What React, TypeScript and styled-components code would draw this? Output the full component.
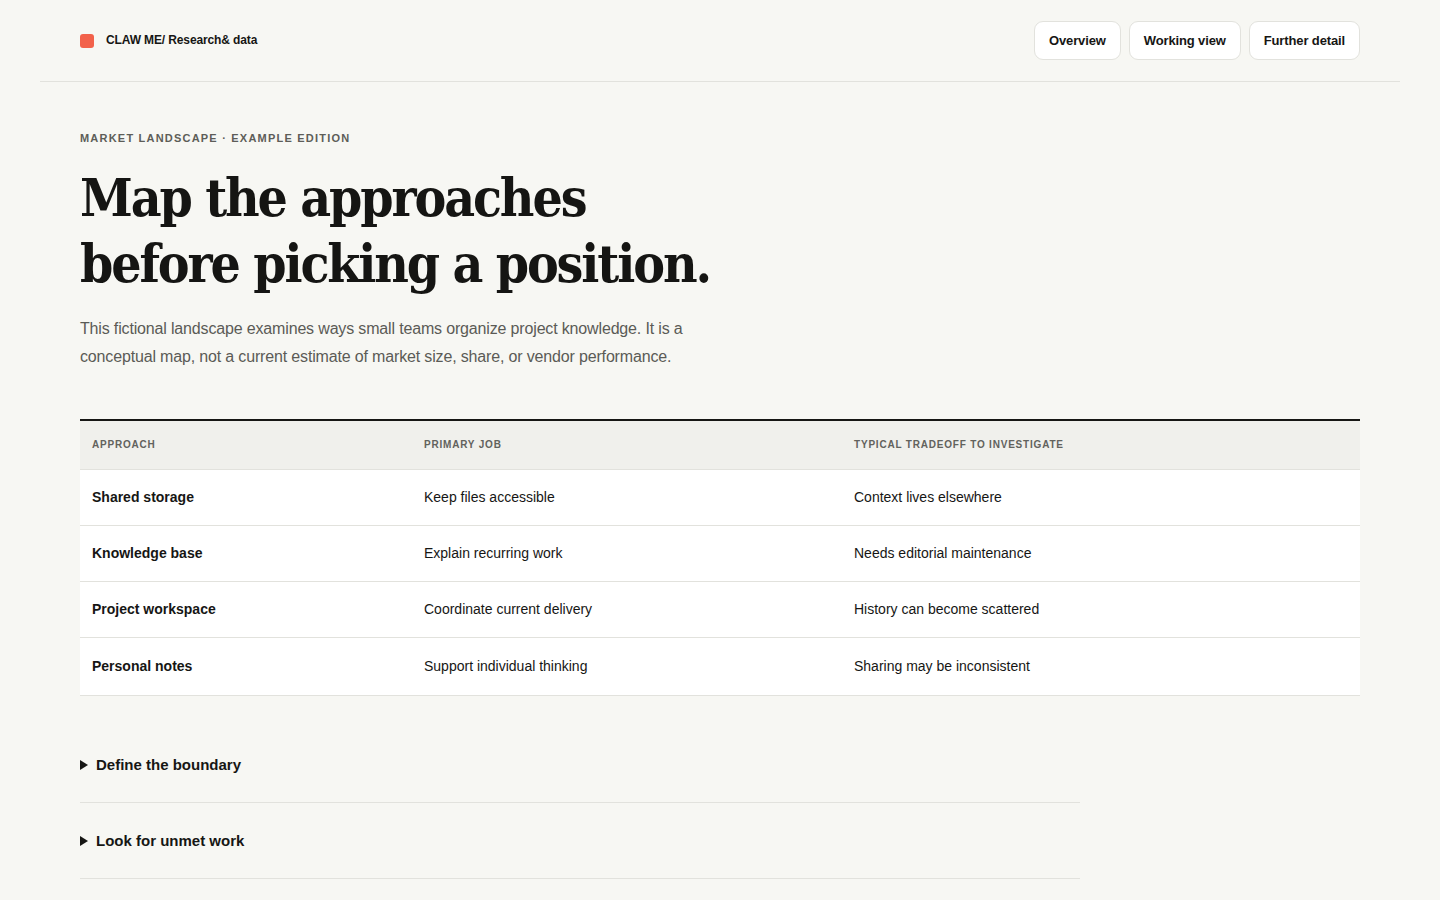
import React from 'react'
import styled, { createGlobalStyle } from 'styled-components'

const GlobalStyle = createGlobalStyle`
  * { box-sizing: border-box; }
  body {
    margin: 0;
    background: #f7f7f3;
    color: #161614;
    font-family: "Liberation Sans", Arial, sans-serif;
  }
`

type Row = {
  approach: string;
  job: string;
  tradeoff: string;
}

const rows: Row[] = [
  { approach: 'Shared storage', job: 'Keep files accessible', tradeoff: 'Context lives elsewhere' },
  { approach: 'Knowledge base', job: 'Explain recurring work', tradeoff: 'Needs editorial maintenance' },
  { approach: 'Project workspace', job: 'Coordinate current delivery', tradeoff: 'History can become scattered' },
  { approach: 'Personal notes', job: 'Support individual thinking', tradeoff: 'Sharing may be inconsistent' },
]

const questions = ['Define the boundary', 'Look for unmet work']

const App = () => {
  return (
    <>
      <GlobalStyle />
      <Header>
        <Brand>
          <BrandMark />
          <BrandText>CLAW ME/ Research&amp; data</BrandText>
        </Brand>
        <Nav>
          <NavButton>Overview</NavButton>
          <NavButton>Working view</NavButton>
          <NavButton>Further detail</NavButton>
        </Nav>
      </Header>
      <Main>
        <Eyebrow>Market landscape · Example edition</Eyebrow>
        <Title>Map the approaches<br />before picking a position.</Title>
        <Lede>
          This fictional landscape examines ways small teams organize project knowledge. It is a
          conceptual map, not a current estimate of market size, share, or vendor performance.
        </Lede>
        <Table>
          <thead>
            <tr>
              <HeadCell $width={332}>Approach</HeadCell>
              <HeadCell $width={430}>Primary job</HeadCell>
              <HeadCell>Typical tradeoff to investigate</HeadCell>
            </tr>
          </thead>
          <tbody>
            {rows.map((row) => (
              <BodyRow key={row.approach}>
                <Cell $strong>{row.approach}</Cell>
                <Cell>{row.job}</Cell>
                <Cell>{row.tradeoff}</Cell>
              </BodyRow>
            ))}
          </tbody>
        </Table>
        <Questions>
          {questions.map((q) => (
            <Question key={q}>
              <Summary>{q}</Summary>
            </Question>
          ))}
        </Questions>
      </Main>
    </>
  )
}

const Header = styled.header`
  display: flex;
  align-items: center;
  justify-content: space-between;
  height: 82px;
  margin: 0 40px;
  padding: 0 40px;
  border-bottom: 1px solid #e2e2dd;
`

const Brand = styled.div`
  display: flex;
  align-items: center;
  gap: 12px;
`

const BrandMark = styled.span`
  width: 14px;
  height: 14px;
  border-radius: 3px;
  background: #f2614a;
`

const BrandText = styled.span`
  font-size: 12px;
  font-weight: 700;
  letter-spacing: -0.01em;
  margin-top: -1px;
`

const Nav = styled.nav`
  display: flex;
  gap: 8px;
`

const NavButton = styled.button`
  height: 39px;
  padding: 0 14px;
  border: 1px solid #e2e2dd;
  border-radius: 9px;
  background: #ffffff;
  color: #161614;
  font-family: inherit;
  font-size: 13px;
  font-weight: 700;
  letter-spacing: -0.01em;
  cursor: pointer;
`

const Main = styled.main`
  padding: 50px 80px 40px;
`

const Eyebrow = styled.div`
  font-size: 11px;
  font-weight: 700;
  letter-spacing: 0.11em;
  text-transform: uppercase;
  color: #5d5d58;
`

const Title = styled.h1`
  margin: 20px 0 0;
  font-family: "DejaVu Serif Condensed", "DejaVu Serif", serif;
  font-stretch: condensed;
  font-size: 53px;
  line-height: 66px;
  font-weight: 700;
  letter-spacing: -0.04em;
  color: #151513;
`

const Lede = styled.p`
  max-width: 640px;
  margin: 19px 0 0;
  font-size: 16px;
  line-height: 28px;
  color: #5b5b56;
  letter-spacing: -0.01em;
`

const Table = styled.table`
  width: 100%;
  margin-top: 48px;
  border-collapse: collapse;
  border-top: 2px solid #161614;
`

const HeadCell = styled.th<{ $width?: number }>`
  width: ${(p) => (p.$width ? `${p.$width}px` : 'auto')};
  height: 49px;
  padding: 0 12px;
  background: #f0f0ec;
  border-bottom: 1px solid #e2e2dd;
  text-align: left;
  font-size: 10px;
  font-weight: 700;
  letter-spacing: 0.08em;
  text-transform: uppercase;
  color: #62625d;
`

const BodyRow = styled.tr`
  &:last-child td {
    height: 58px;
  }
`

const Cell = styled.td<{ $strong?: boolean }>`
  height: 56px;
  padding: 0 12px;
  background: #ffffff;
  border-bottom: 1px solid #e2e2dd;
  font-size: 14px;
  font-weight: ${(p) => (p.$strong ? 700 : 400)};
  color: #161614;
`

const Questions = styled.div`
  width: 1000px;
  margin-top: 31px;
`

const Question = styled.details`
  border-bottom: 1px solid #e2e2dd;
  padding: 28px 0 27px;
`

const Summary = styled.summary`
  display: flex;
  align-items: center;
  gap: 8px;
  height: 20px;
  list-style: none;
  font-size: 15px;
  font-weight: 700;
  cursor: pointer;
  &::-webkit-details-marker {
    display: none;
  }
  &::before {
    content: '';
    width: 0;
    height: 0;
    border-top: 5px solid transparent;
    border-bottom: 5px solid transparent;
    border-left: 8px solid #161614;
  }
`

export default App
